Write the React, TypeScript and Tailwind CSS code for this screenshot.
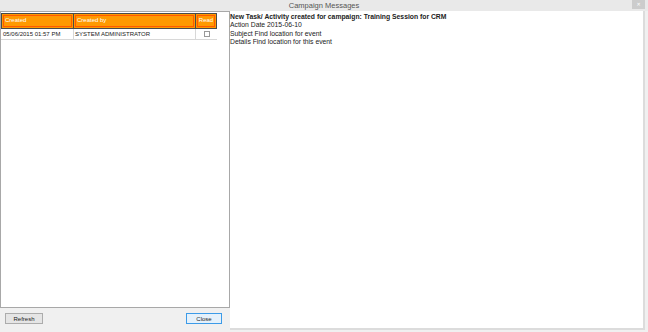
import { useState } from 'react';

interface Message {
  created: string;
  createdBy: string;
  read: boolean;
}

const messages: Message[] = [
  { created: '05/06/2015 01:57 PM', createdBy: 'SYSTEM ADMINISTRATOR', read: false },
];

const font = { fontFamily: '"Liberation Sans", "DejaVu Sans", sans-serif' };

export default function App() {
  const [rows, setRows] = useState(messages);

  return (
    <div className="w-[648px] h-[332px] bg-[#f0f0f0] flex flex-col overflow-hidden text-[#222]" style={font}>
      <div className="relative h-[11px] flex items-center justify-center bg-[#e9e9e9]">
        <span className="text-[7.5px] leading-none text-[#555]">Campaign Messages</span>
        <button className="absolute right-[3px] top-0 w-[13px] h-[9px] bg-[#cccccc] flex items-center justify-center text-[5px] leading-none text-white">
          ✕
        </button>
      </div>

      <div className="flex flex-1 min-h-0">
        <div className="w-[230px] flex flex-col">
          <div className="h-[297px] bg-white border border-[#a8a8a8] pt-[1px]">
            <div className="w-[216px] flex h-[16px] bg-[#ff9900] border border-[#4a4a4a] text-white text-[6px] leading-none">
              <div className="w-[72px] border-r border-[#4a4a4a] p-[1px]">
                <div className="h-full border border-[#ff5a00] pl-[1px] pt-[1px]">Created</div>
              </div>
              <div className="w-[122px] border-r border-[#4a4a4a] p-[1px]">
                <div className="h-full border border-[#ff5a00] pl-[1px] pt-[1px]">Created by</div>
              </div>
              <div className="flex-1 p-[1px]">
                <div className="h-full border border-[#ff5a00] text-center pt-[1px]">Read</div>
              </div>
            </div>
            {rows.map((r, i) => (
              <div key={i} className="w-[216px] flex h-[11px] border-b border-[#d8d8d8] text-[6px] leading-none items-center text-[#222]">
                <div className="w-[73px] h-full border-r border-[#d8d8d8] pl-[2px] flex items-center">{r.created}</div>
                <div className="w-[122px] h-full border-r border-[#d8d8d8] pl-[1px] flex items-center">{r.createdBy}</div>
                <div className="flex-1 h-full flex items-center justify-center">
                  <input
                    type="checkbox"
                    checked={r.read}
                    onChange={() => setRows(rows.map((x, j) => (j === i ? { ...x, read: !x.read } : x)))}
                    className="appearance-none w-[6px] h-[6px] border border-[#999] bg-white"
                  />
                </div>
              </div>
            ))}
          </div>
          <div className="flex items-start justify-between pl-[5px] pr-[8px] pt-[5px]">
            <button className="w-[38px] h-[11px] border border-[#acacac] bg-[#e5e5e5] text-[6px] leading-none text-[#222]">
              Refresh
            </button>
            <button className="w-[36px] h-[11px] border border-[#3c9be8] bg-[#e5f1fb] text-[6px] leading-none text-[#222]">
              Close
            </button>
          </div>
        </div>

        <div className="flex-1 mr-[3px] mb-[2px] bg-white border-r-2 border-b-2 border-[#dcdcdc] pt-[2px] text-[6.8px] leading-[8.4px]">
          <div className="font-bold">New Task/ Activity created for campaign: Training Session for CRM</div>
          <div>Action Date 2015-06-10</div>
          <div>Subject Find location for event</div>
          <div>Details Find location for this event</div>
        </div>
      </div>
    </div>
  );
}
